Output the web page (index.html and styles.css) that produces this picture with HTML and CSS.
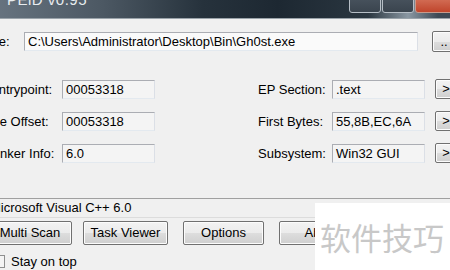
FILE: index.html
```html
<!DOCTYPE html>
<html>
<head>
<meta charset="utf-8">
<link rel="stylesheet" href="styles.css">
</head>
<body>
<div class="window">
  <div class="titlebar">
    <span class="title">PEiD v0.95</span>
    <div class="controls">
      <span class="ctl"></span><span class="ctl"></span><span class="ctl close"></span>
    </div>
  </div>
  <div class="client">
    <div class="filerow">
      <span class="flabel">File:</span>
      <div class="box filebox">C:\Users\Administrator\Desktop\Bin\Gh0st.exe</div>
      <div class="btn browse">..</div>
    </div>
    <div class="info">
      <div class="col left">
        <div class="row"><span class="lbl">Entrypoint:</span><div class="box vbox">00053318</div></div>
        <div class="row"><span class="lbl lbl2">File Offset:</span><div class="box vbox">00053318</div></div>
        <div class="row"><span class="lbl">Linker Info:</span><div class="box vbox">6.0</div></div>
      </div>
      <div class="col right">
        <div class="row"><span class="rlbl">EP Section:</span><div class="box vbox">.text</div><div class="btn sbtn">&gt;</div></div>
        <div class="row"><span class="rlbl">First Bytes:</span><div class="box vbox">55,8B,EC,6A</div><div class="btn sbtn">&gt;</div></div>
        <div class="row"><span class="rlbl">Subsystem:</span><div class="box vbox">Win32 GUI</div><div class="btn sbtn">&gt;</div></div>
      </div>
    </div>
    <div class="detect">Microsoft Visual C++ 6.0</div>
    <div class="buttons">
      <div class="btn big b1">Multi Scan</div>
      <div class="btn big b2">Task Viewer</div>
      <div class="btn big b3">Options</div>
      <div class="btn big b4">About</div>
    </div>
    <div class="checkrow"><span class="check"></span><span>Stay on top</span></div>
  </div>
</div>
<div class="watermark">软件技巧</div>
</body>
</html>
```
FILE: styles.css
```css
html, body {
  margin: 0;
  padding: 0;
  width: 450px;
  height: 270px;
  overflow: hidden;
  background: #f0f0f0;
  font-family: "Liberation Sans", Arial, sans-serif;
  font-size: 13px;
  color: #000;
  position: relative;
}
.window {
  margin-left: -22px;
  width: 500px;
}
.titlebar {
  height: 18px;
  background: linear-gradient(90deg, #6b7884 0%, #4c5863 25%, #26323c 45%, #1d2832 60%, #2a3640 78%, #8a97a2 86%, #3d4955 92%);
  border-bottom: 1px solid #9aa3aa;
  position: relative;
  overflow: hidden;
}
.title {
  position: absolute;
  left: 29px;
  top: -9px;
  font-size: 15px;
  color: #e8ecef;
  letter-spacing: 0.5px;
}
.controls {
  position: absolute;
  left: 371px;
  top: -6px;
  display: flex;
}
.ctl {
  width: 30px;
  height: 17px;
  border: 1px solid #b6bec6;
  border-radius: 3px;
  margin-right: 1px;
  background: linear-gradient(#4b5661, #3a444e);
}
.ctl.close {
  width: 50px;
  border-color: #c79a8c;
  background: linear-gradient(#d87a62, #c0452c);
}
.client {
  padding-top: 11px;
}
.filerow {
  display: flex;
  align-items: center;
  height: 22px;
}
.flabel {
  width: 46px;
  padding-left: 7px;
  box-sizing: border-box;
}
.box {
  border: 1px solid #abadb3;
  border-bottom-color: #e3e9ef;
  border-right-color: #dbdfe6;
  background: #f4f4f4;
  height: 19px;
  box-sizing: border-box;
  padding-left: 3px;
  line-height: 17px;
  white-space: nowrap;
}
.filebox {
  width: 394px;
  background: #fafafa;
}
.btn {
  border: 1px solid #707070;
  border-radius: 2px;
  background: linear-gradient(#f3f3f3 0%, #ebebeb 50%, #dddddd 51%, #cfcfcf 100%);
  box-shadow: inset 0 0 0 1px #fcfcfc;
  box-sizing: border-box;
  text-align: center;
  white-space: nowrap;
}
.browse {
  margin-left: 14px;
  width: 24px;
  height: 21px;
  line-height: 19px;
}
.info {
  display: flex;
  margin-top: 27px;
}
.col {
  display: flex;
  flex-direction: column;
  gap: 12px;
}
.row {
  display: flex;
  align-items: center;
  height: 20px;
}
.left {
  width: 280px;
}
.lbl {
  width: 84px;
  padding-left: 12px;
  box-sizing: border-box;
}
.lbl2 {
  padding-left: 8px;
}
.vbox {
  width: 93px;
}
.rlbl {
  width: 74px;
}
.sbtn {
  margin-left: 10px;
  width: 22px;
  height: 20px;
  line-height: 18px;
}
.detect {
  margin-top: 35px;
  margin-left: 12px;
  width: 480px;
  height: 20px;
  border-top: 1px solid #a0a0a0;
  border-bottom: 1px solid #dcdcdc;
  box-sizing: border-box;
  line-height: 18px;
}
.buttons {
  display: flex;
  margin-top: 3px;
  margin-left: 10px;
  gap: 11px;
}
.big {
  height: 24px;
  line-height: 22px;
  width: 85px;
}
.b1 { width: 84px; }
.b3 { margin-left: 4px; width: 81px; }
.b4 { margin-left: 4px; }
.checkrow {
  display: flex;
  align-items: center;
  margin-top: 9px;
  margin-left: 14px;
  gap: 6px;
}
.check {
  width: 11px;
  height: 11px;
  border: 1px solid #8e8f8f;
  background: #f4f4f4;
}
.watermark {
  position: absolute;
  left: 315px;
  top: 203px;
  width: 135px;
  height: 67px;
  background: #ffffff;
  color: #c8c8c8;
  font-family: "Noto Sans CJK SC", sans-serif;
  font-size: 31px;
  line-height: 67px;
  padding-left: 5px;
  box-sizing: border-box;
}
```
